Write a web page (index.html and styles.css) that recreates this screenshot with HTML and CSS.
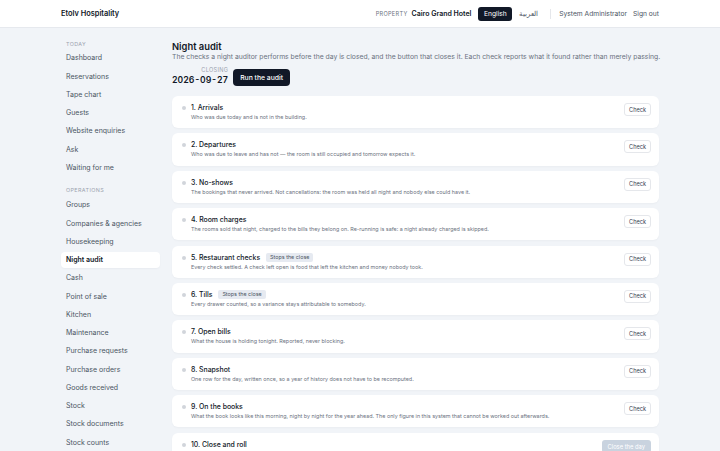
FILE: index.html
```html
<!DOCTYPE html>
<html lang="en">
<head>
	<meta charset="UTF-8" />
	<meta name="viewport" content="width=device-width, initial-scale=1.0" />
	<title>Night audit · Etolv Hospitality</title>
	<link rel="stylesheet" href="styles.css">
</head>
<body>
    <header class="topbar">
        <div class="topbar-inner">
            <div class="brand">Etolv Hospitality</div>
            <div class="topbar-right">
                <span class="prop-label">Property</span>
                <span class="prop-name">Cairo Grand Hotel</span>
                <span class="lang lang-active">English</span>
                <span class="lang" lang="ar">العربية</span>
                <span class="sep"></span>
                <span class="user">System Administrator</span>
                <a class="user" href="#">Sign out</a>
            </div>
        </div>
    </header>

    <div class="container">
        <nav class="sidebar">
            <div class="nav-label">Today</div>
            <a class="nav-item" href="#">Dashboard</a>
            <a class="nav-item" href="#">Reservations</a>
            <a class="nav-item" href="#">Tape chart</a>
            <a class="nav-item" href="#">Guests</a>
            <a class="nav-item" href="#">Website enquiries</a>
            <a class="nav-item" href="#">Ask</a>
            <a class="nav-item" href="#">Waiting for me</a>

            <div class="nav-label nav-label-gap">Operations</div>
            <a class="nav-item" href="#">Groups</a>
            <a class="nav-item" href="#">Companies &amp; agencies</a>
            <a class="nav-item" href="#">Housekeeping</a>
            <a class="nav-item active" href="#">Night audit</a>
            <a class="nav-item" href="#">Cash</a>
            <a class="nav-item" href="#">Point of sale</a>
            <a class="nav-item" href="#">Kitchen</a>
            <a class="nav-item" href="#">Maintenance</a>
            <a class="nav-item" href="#">Purchase requests</a>
            <a class="nav-item" href="#">Purchase orders</a>
            <a class="nav-item" href="#">Goods received</a>
            <a class="nav-item" href="#">Stock</a>
            <a class="nav-item" href="#">Stock documents</a>
            <a class="nav-item" href="#">Stock counts</a>
        </nav>

        <main class="main">
            <h1>Night audit</h1>
            <p class="lead">The checks a night auditor performs before the day is closed, and the button that closes it. Each check reports what it found rather than merely passing.</p>

            <div class="closing-row">
                <div class="closing">
                    <span class="closing-label">Closing</span>
                    <span class="closing-date">2026-09-27</span>
                </div>
                <button class="btn-dark">Run the audit</button>
            </div>

            <div class="checks">
                <div class="check">
                    <span class="dot"></span>
                    <div class="check-body">
                        <div class="check-title">1. Arrivals</div>
                        <div class="check-desc">Who was due today and is not in the building.</div>
                    </div>
                    <button class="btn-check">Check</button>
                </div>
                <div class="check">
                    <span class="dot"></span>
                    <div class="check-body">
                        <div class="check-title">2. Departures</div>
                        <div class="check-desc">Who was due to leave and has not — the room is still occupied and tomorrow expects it.</div>
                    </div>
                    <button class="btn-check">Check</button>
                </div>
                <div class="check">
                    <span class="dot"></span>
                    <div class="check-body">
                        <div class="check-title">3. No-shows</div>
                        <div class="check-desc">The bookings that never arrived. Not cancellations: the room was held all night and nobody else could have it.</div>
                    </div>
                    <button class="btn-check">Check</button>
                </div>
                <div class="check">
                    <span class="dot"></span>
                    <div class="check-body">
                        <div class="check-title">4. Room charges</div>
                        <div class="check-desc">The rooms sold that night, charged to the bills they belong on. Re-running is safe: a night already charged is skipped.</div>
                    </div>
                    <button class="btn-check">Check</button>
                </div>
                <div class="check">
                    <span class="dot"></span>
                    <div class="check-body">
                        <div class="check-title">5. Restaurant checks <span class="badge">Stops the close</span></div>
                        <div class="check-desc">Every check settled. A check left open is food that left the kitchen and money nobody took.</div>
                    </div>
                    <button class="btn-check">Check</button>
                </div>
                <div class="check">
                    <span class="dot"></span>
                    <div class="check-body">
                        <div class="check-title">6. Tills <span class="badge">Stops the close</span></div>
                        <div class="check-desc">Every drawer counted, so a variance stays attributable to somebody.</div>
                    </div>
                    <button class="btn-check">Check</button>
                </div>
                <div class="check">
                    <span class="dot"></span>
                    <div class="check-body">
                        <div class="check-title">7. Open bills</div>
                        <div class="check-desc">What the house is holding tonight. Reported, never blocking.</div>
                    </div>
                    <button class="btn-check">Check</button>
                </div>
                <div class="check">
                    <span class="dot"></span>
                    <div class="check-body">
                        <div class="check-title">8. Snapshot</div>
                        <div class="check-desc">One row for the day, written once, so a year of history does not have to be recomputed.</div>
                    </div>
                    <button class="btn-check">Check</button>
                </div>
                <div class="check">
                    <span class="dot"></span>
                    <div class="check-body">
                        <div class="check-title">9. On the books</div>
                        <div class="check-desc">What the book looks like this morning, night by night for the year ahead. The only figure in this system that cannot be worked out afterwards.</div>
                    </div>
                    <button class="btn-check">Check</button>
                </div>
                <div class="check">
                    <span class="dot"></span>
                    <div class="check-body">
                        <div class="check-title">10. Close and roll</div>
                        <div class="check-desc">Closes the day and moves the hotel on to tomorrow, once every check above has passed.</div>
                    </div>
                    <button class="btn-close" disabled>Close the day</button>
                </div>
            </div>
        </main>
    </div>
</body>
</html>
```

FILE: styles.css
```css
* {
    box-sizing: border-box;
}

body {
    margin: 0;
    background-color: #f1f4f8;
    font-family: Inter, "Noto Sans", Arial, sans-serif;
    color: #111827;
}

a {
    color: inherit;
    text-decoration: none;
}

button {
    font-family: inherit;
    cursor: pointer;
}

/* top bar */
.topbar {
    background-color: #ffffff;
    border-bottom: 1px solid #e6e9ee;
}

.topbar-inner {
    max-width: 598px;
    margin: 0 auto;
    height: 27px;
    display: flex;
    align-items: center;
    justify-content: space-between;
}

.brand {
    font-size: 7.4px;
    font-weight: 600;
}

.topbar-right {
    display: flex;
    align-items: center;
    font-size: 6.7px;
}

.prop-label {
    font-size: 5.6px;
    text-transform: uppercase;
    letter-spacing: 0.3px;
    color: #6b7280;
    margin-right: 4px;
}

.prop-name {
    font-size: 7px;
    font-weight: 600;
    margin-right: 7px;
}

.lang {
    color: #4b5563;
    margin-right: 7px;
}

.lang-active {
    background-color: #111827;
    color: #ffffff;
    border-radius: 3px;
    padding: 3px 5.5px;
}

.sep {
    width: 1px;
    height: 10px;
    background-color: #e5e7eb;
    margin: 0 8px 0 5px;
}

.user {
    color: #4b5563;
    margin-right: 6px;
}

.user:last-child {
    margin-right: 0;
}

/* layout */
.container {
    max-width: 598px;
    margin: 0 auto;
    display: flex;
    gap: 12px;
    padding-top: 12px;
}

.sidebar {
    width: 99px;
    flex-shrink: 0;
    display: flex;
    flex-direction: column;
    gap: 2.25px;
}

.nav-label {
    font-size: 5.4px;
    line-height: 8px;
    text-transform: uppercase;
    letter-spacing: 0.4px;
    color: #9ca3af;
    padding-left: 5px;
}

.nav-label-gap {
    margin-top: 8px;
    margin-bottom: 1px;
}

.nav-item {
    font-size: 7px;
    line-height: 16px;
    color: #4b5563;
    padding-left: 5px;
    border-radius: 4px;
}

.nav-item.active {
    background-color: #ffffff;
    color: #111827;
    font-weight: 600;
    box-shadow: 0 1px 2px rgba(15, 23, 42, 0.04);
}

.main {
    flex: 1;
    min-width: 0;
}

h1 {
    margin: 0;
    font-size: 9.4px;
    line-height: 13px;
    font-weight: 600;
}

.lead {
    margin: 0;
    font-size: 6.8px;
    line-height: 8px;
    color: #6b7280;
    white-space: nowrap;
}

.closing-row {
    display: flex;
    align-items: flex-end;
    gap: 5px;
    margin-top: 5px;
}

.closing {
    display: flex;
    flex-direction: column;
    align-items: flex-end;
}

.closing-label {
    font-size: 5.6px;
    line-height: 8px;
    text-transform: uppercase;
    letter-spacing: 0.3px;
    color: #9ca3af;
}

.closing-date {
    font-size: 8.7px;
    line-height: 13px;
    font-weight: 600;
    font-variant-numeric: tabular-nums;
}

.btn-dark {
    background-color: #111827;
    color: #ffffff;
    border: none;
    border-radius: 4px;
    height: 17px;
    padding: 0 7px;
    font-size: 6.8px;
    font-weight: 500;
    margin-bottom: 1px;
}

/* checks */
.checks {
    display: flex;
    flex-direction: column;
    gap: 5.1px;
    margin-top: 9px;
}

.check {
    background-color: #ffffff;
    border-radius: 6px;
    display: flex;
    align-items: flex-start;
    padding: 7px 8px 7.3px 8px;
    box-shadow: 0 1px 2px rgba(15, 23, 42, 0.03);
}

.dot {
    width: 4px;
    height: 4px;
    border-radius: 50%;
    background-color: #d1d5db;
    margin: 3px 5px 0 2px;
    flex-shrink: 0;
}

.check-title {
    font-size: 6.9px;
    line-height: 10px;
    font-weight: 500;
    display: flex;
    align-items: center;
    gap: 6px;
}

.check-body {
    flex: 1;
    min-width: 0;
}

.check-desc {
    font-size: 5.4px;
    line-height: 8px;
    color: #6b7280;
    white-space: nowrap;
}

.badge {
    font-size: 5.4px;
    line-height: 9px;
    font-weight: 400;
    color: #4b5563;
    background-color: #e6eaf1;
    border-radius: 2px;
    padding: 0 4px;
}

.btn-check {
    background-color: #ffffff;
    color: #374151;
    border: 1px solid #e5e7eb;
    border-radius: 3px;
    height: 13px;
    padding: 0 4px;
    font-size: 5.6px;
    flex-shrink: 0;
}

.btn-close {
    background-color: #c9d3df;
    color: #ffffff;
    border: none;
    border-radius: 3px;
    height: 13px;
    padding: 0 6px;
    font-size: 5.8px;
    flex-shrink: 0;
    cursor: default;
}
```
